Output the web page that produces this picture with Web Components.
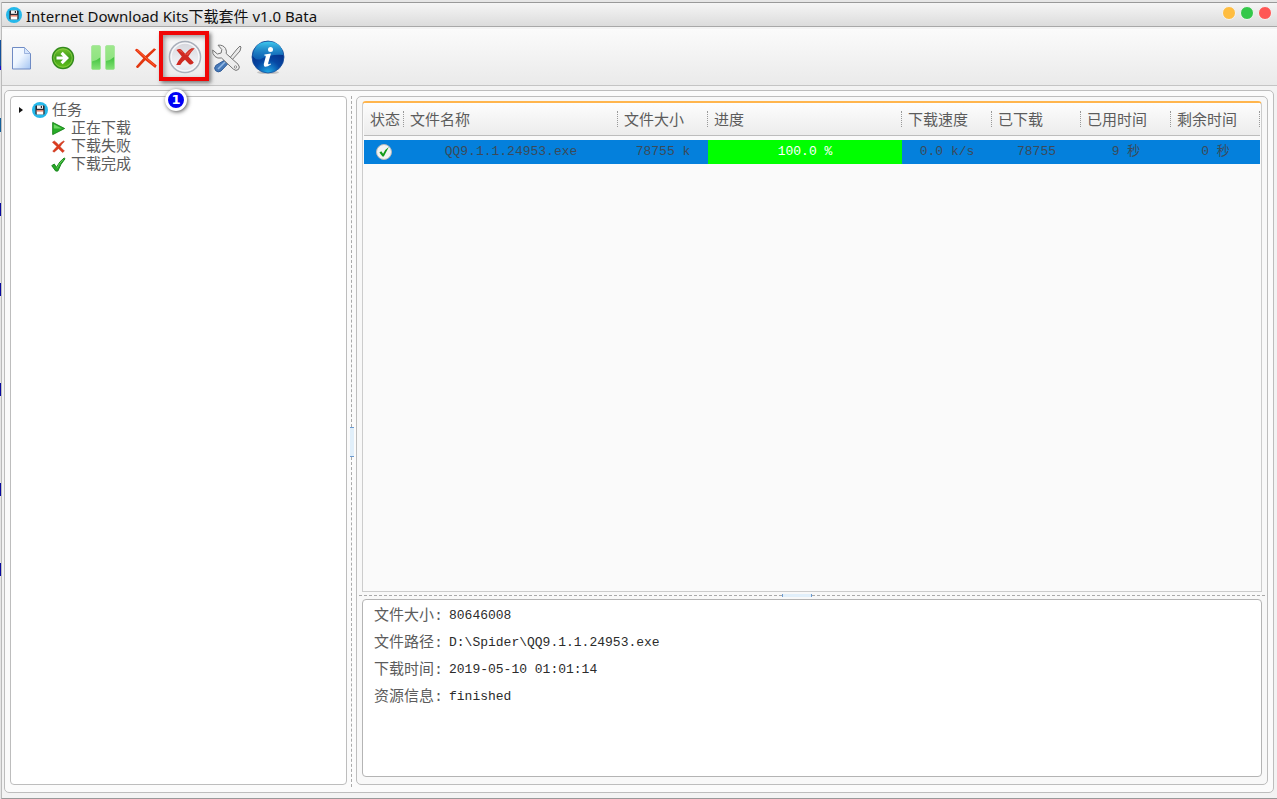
<!DOCTYPE html>
<html lang="zh-CN">
<head>
<meta charset="utf-8">
<title>Internet Download Kits下载套件 v1.0 Bata</title>
<style>
  html, body { height: 100%; margin: 0; }
  body {
    background: linear-gradient(#e6e6e6 40px, #14509a 40px 66px, #1a0ad0 66px 70px, #e6e6e6 70px 118px, #14609a 118px 132px, #e6e6e6 132px 203px, #0a0aa0 203px 216px, #e6e6e6 216px 283px, #0a0aa0 283px 296px, #e6e6e6 296px 383px, #0a0aa0 383px 396px, #e6e6e6 396px 483px, #0a0aa0 483px 496px, #e6e6e6 496px 563px, #0a0aa0 563px 576px, #e6e6e6 576px);
    box-sizing: border-box;
    padding: 2px 0 0 1px;
    font-family: "Liberation Mono", "Noto Sans CJK SC", monospace;
    color: #5c5c5c;
    overflow: hidden;
  }
</style>
</head>
<body>
<download-app></download-app>
<script>
const define = (name, html, setup) => {
  const template = document.createElement('template');
  template.innerHTML = html;
  customElements.define(name, class extends HTMLElement {
    constructor() {
      super();
      const root = this.attachShadow({ mode: 'open' });
      root.append(template.content.cloneNode(true));
      if (setup) setup(this, root);
    }
  });
};

const ICONS = {
  disk: `<svg viewBox="0 0 16 16"><circle cx="8" cy="8" r="8" fill="#25b8ea"/><path d="M3.400 4.200q0-.8.8-.8h7.600q.8 0 .8.8v7.600q0 .8-.8.8H4.200q-.8 0-.8-.8z" fill="#2b2b33"/><path d="M5 3.400h6v3.400H5z" fill="#f3f3f3"/><path d="M8.800 3.900h1.200v2.200H8.800z" fill="#2b2b33"/><path d="M4.700 8.300h6.600v4.200H4.700z" fill="#fff"/><path d="M4.700 8.300h6.600v1.200H4.700z" fill="#ef6a4c"/></svg>`,
  file: `<svg viewBox="0 0 36 36"><defs><linearGradient id="f" x1="0" y1="0" x2="1" y2="1"><stop offset="0" stop-color="#f6faff"/><stop offset=".45" stop-color="#eef6ff"/><stop offset="1" stop-color="#a3c4f2"/></linearGradient></defs><path d="M8.500 8.500h12l6 6v15.500H8.500z" fill="url(#f)" stroke="#6f8bc4"/><path d="M20.500 8.500v6h6z" fill="#d5e6fd" stroke="#8ba5d6" stroke-width=".8"/></svg>`,
  go: `<svg viewBox="0 0 36 36"><defs><linearGradient id="g" x1="0" y1="0" x2="0" y2="1"><stop offset="0" stop-color="#7cc832"/><stop offset=".5" stop-color="#3d9d19"/><stop offset="1" stop-color="#68c61c"/></linearGradient></defs><circle cx="18" cy="19" r="10.500" fill="url(#g)" stroke="#338a1d" stroke-width="1.400"/><circle cx="18" cy="19" r="9.200" fill="none" stroke="#8fd14a" stroke-width=".8"/><path d="M11.500 17.500H18l-2.500-2.600 2.200-2.200 6.300 6.300-6.300 6.300-2.200-2.200 2.500-2.600h-6.500z" fill="#fff"/></svg>`,
  pause: `<svg viewBox="0 0 36 36"><defs><linearGradient id="p" x1="0" y1="0" x2="0" y2="1"><stop offset="0" stop-color="#9ee88c"/><stop offset="1" stop-color="#86e07a"/></linearGradient><linearGradient id="q" x1="0" y1="0" x2="0" y2="1"><stop offset="0" stop-color="#3fc03c"/><stop offset="1" stop-color="#84e276"/></linearGradient></defs><g fill="url(#p)" stroke="#a4e59a" stroke-width=".8"><rect x="5.500" y="6.500" width="9" height="24" rx="1.500"/><rect x="19.500" y="6.500" width="9" height="24" rx="1.500"/></g><path d="M6 22.500q5-1 8.100-4v11q0 .8-.8.800H6.800q-.8 0-.8-.8zM20 22q5-1 8.100-4v11.500q0 .8-.8.8h-6.500q-.8 0-.8-.8z" fill="url(#q)"/></svg>`,
  cross: `<svg viewBox="0 0 36 36"><path d="M8 11.300Q9 8.600 11.200 10.400Q20 18.500 29.800 26.400L28.200 29Q17 21 8 11.300z" fill="#e9330f"/><path d="M27 9.300L29.200 10.500Q20 19 11.600 28.400Q9.500 30 9 27.600Q17 17.500 27 9.300z" fill="#e23710"/><path d="M10 11l17.500 15.500" stroke="#ff7438" stroke-width=".8"/></svg>`,
  stop: `<svg viewBox="0 0 36 36"><defs><linearGradient id="s" x1="0" y1="0" x2="0" y2="1"><stop offset="0" stop-color="#d4d5db"/><stop offset=".7" stop-color="#f0f1f5"/><stop offset="1" stop-color="#dfe4ec"/></linearGradient></defs><circle cx="17" cy="18" r="15.500" fill="url(#s)" stroke="#aab0bb" stroke-width="1.600"/><circle cx="17" cy="18" r="13.900" fill="none" stroke="#f8f8fa" stroke-width="1.300"/><path d="M8.500 11q3.500-2.200 5.500.2l3.200 3.500Q20 11 23.500 9.300h3.200Q23 13 20.300 17.500l5.500 6q-2.400 3.500-5 1.200L17 20.800Q14 23 12.300 26H8.200q2-4.500 5.600-8.500z" fill="#cf2a22"/><path d="M9.800 11.300q3-1 3.800.5l3.700 4.500Q20 12.500 24 10.200h1l-5.500 6z" fill="#e8604f" opacity=".7"/></svg>`,
  tools: `<svg viewBox="0 0 36 36"><path d="M31 7l1 1-1 4-9 10-2-2 8-10z" fill="#e9e9e9" stroke="#777" stroke-width="1"/><path d="M17.500 20l3 3-8.500 9q-3 2-5.500-.4-2-2.600.5-5.300z" fill="#4679b8" stroke="#315c98"/><path d="M16 23l-7 7" stroke="#94b9e4" stroke-width="1.600"/><path d="M9 6.200q5-.6 7.500 3.200 1.500 3 .7 5.200L29 25.200q2.500 3 .5 5.200-2.500 2.200-5.200-.3L12.500 19q-4 .8-6.500-1.500-3-2.800-2.300-6.500l4.700 4 3.700-1 .7-3.500z" fill="#ededed" stroke="#747474"/><circle cx="26.500" cy="28" r="1.200" fill="#fff" stroke="#777" stroke-width=".8"/></svg>`,
  info: `<svg viewBox="0 0 36 36"><defs><radialGradient id="i" cx=".5" cy="1" r=".9"><stop offset="0" stop-color="#20aee8"/><stop offset=".45" stop-color="#0648a4"/><stop offset="1" stop-color="#06257c"/></radialGradient><linearGradient id="j" x1="0" y1="0" x2="0" y2="1"><stop offset="0" stop-color="#3ec8ee"/><stop offset="1" stop-color="#1478c8" stop-opacity=".55"/></linearGradient></defs><ellipse cx="18" cy="33.500" rx="11" ry="1.600" fill="#999" opacity=".5"/><g transform="translate(0 1)"><circle cx="18" cy="17" r="16" fill="url(#i)" stroke="#174f9c" stroke-width=".8"/><path d="M2.700 16Q4 2 18 1.600 32 2 33.300 15 20 14 10 19.500 5 20 2.700 16z" fill="url(#j)"/><circle cx="20.500" cy="9.500" r="2.500" fill="#fff"/><path d="M14.500 14.500l6.500-1-2.800 9.500q-.5 2.300 2.300.4l.6.800Q13.500 29.500 13.800 24l2-7.500q.2-1.300-1.700-1z" fill="#fff"/></g></svg>`,
  play: `<svg viewBox="0 0 16 16"><path d="M1.800 1.500L14.500 8 1.800 14.500z" fill="#27ad27" stroke="#168216"/><path d="M3 3.500l8.500 4.500H3z" fill="#6ed964"/></svg>`,
  fail: `<svg viewBox="0 0 16 16"><path d="M1.500 3.500l2-1.500q3 2 4.600 4.300Q10.500 3.600 13.500 2l.8.700Q11.500 5 9.700 8.200l4.600 4.600-2 1.700L8 10.200 3.300 14l-1.500-1L6.300 8z" fill="#dd3a1d" stroke="#b82d16" stroke-width=".5"/></svg>`,
  done: `<svg viewBox="0 0 16 16"><path d="M.8 9.200L3.500 7.500 5.800 11Q9 4.500 14 1l1 .8Q10 7.500 7.300 15H5z" fill="#27a827" stroke="#15831a"/><path d="M6.300 12Q9 6 13 2.800" fill="none" stroke="#77dc69" stroke-width=".8"/></svg>`,
  status: `<svg viewBox="0 0 16 16"><circle cx="8" cy="8" r="7.500" fill="#f3f3f3" stroke="#b9b9b9"/><path d="M3.400 8.600l1.900-1.300 1.800 2.400Q9.300 5 12.800 3L7.800 12.500H6.500z" fill="#149b1b"/></svg>`
};

define('app-icon', `<style>
  :host { display: inline-block; flex: none; width: 16px; height: 16px; }
  svg { display: block; width: 100%; height: 100%; }
</style>`, (host, root) => {
  root.append(document.createRange().createContextualFragment(ICONS[host.getAttribute('name')]));
});

define('title-bar', `<style>
  :host { display: flex; align-items: center; height: 23px; padding: 0 5px 0 4px; background: linear-gradient(#f5f5f5, #dcdcdc); border-top: 1px solid #999; border-bottom: 1px solid #a8a8a8; color: #111; }
  h1 { flex: 1; margin: 0 0 0 4px; padding-top: 3px; font: 400 15px/20px "Noto Sans", "Noto Sans CJK SC", sans-serif; white-space: nowrap; }
  .buttons { display: flex; gap: 4px; align-self: flex-start; padding-top: 3px; }
  button { width: 14px; height: 14px; padding: 0; border: 1px solid #f4f4f4; border-radius: 50%; background: #ffbd40; }
  button:nth-child(2) { background: #34c84a; }
  button:nth-child(3) { background: #ff5755; }
</style>
<app-icon name="disk"></app-icon><h1><slot></slot></h1>
<div class="buttons"><button aria-label="最小化"></button><button aria-label="最大化"></button><button aria-label="关闭"></button></div>`);

define('tool-button', `<style>
  :host { display: block; position: relative; }
  button { display: block; width: 41px; height: 40px; padding: 0 2px; border: 0; background: none; }
  .frame, .badge { display: none; box-sizing: border-box; position: absolute; pointer-events: none; }
  :host([marked]) .frame { display: block; left: -7px; top: -6px; width: 50px; height: 50px; border: 4px solid #f00606; box-shadow: 2px 2px 4px #777, inset 2px 2px 5px #999; }
  :host([marked]) .badge { display: block; left: -1px; top: 52px; width: 22px; height: 22px; border: 3px solid #fff; border-radius: 50%; background: #0000f5; color: #fff; box-shadow: 1px 1px 4px #555; font: 700 13px/16px "DejaVu Sans", sans-serif; text-align: center; z-index: 2; }
</style>
<button></button><span class="frame"></span><span class="badge"><slot></slot></span>`, (host, root) => {
  const button = root.querySelector('button');
  button.setAttribute('aria-label', host.getAttribute('label'));
  button.append(document.createElement('app-icon-' + host.getAttribute('icon')));
});

for (const name of ['file', 'go', 'pause', 'cross', 'stop', 'tools', 'info']) {
  define('app-icon-' + name, `<style>:host { display: block; width: 36px; height: 36px; } svg { display: block; }</style>${ICONS[name]}`);
}

define('tool-bar', `<style>
  :host { display: flex; box-sizing: border-box; height: 59px; padding-top: 8px; background: linear-gradient(#fbfbfb, #eaeaea); border-top: 2px solid #f4f4f4; border-bottom: 1px solid #c4c4c4; }
</style>
<tool-button icon="file" label="新建"></tool-button><tool-button icon="go" label="开始"></tool-button><tool-button icon="pause" label="暂停"></tool-button><tool-button icon="cross" label="删除"></tool-button><tool-button icon="stop" label="全部删除" marked>1</tool-button><tool-button icon="tools" label="设置"></tool-button><tool-button icon="info" label="关于"></tool-button>`);

define('task-tree', `<style>
  :host { display: block; box-sizing: border-box; padding: 4px 7px; border: 1px solid #bdbdbd; border-radius: 4px; background: #fff; font-size: 15px; line-height: 18px; }
  ul { list-style: none; margin: 0; padding: 0; }
  ul ul { padding-left: 33px; }
  .row { display: flex; align-items: center; gap: 5px; height: 18px; }
  .root { gap: 4px; }
  .label { padding-top: 4px; }
  .arrow { box-sizing: border-box; border: 3px solid transparent; border-left: 4px solid #111; border-right: 0; height: 6px; width: 4px; margin: 0 5px 0 1px; }
  ul ul app-icon { width: 15px; height: 15px; }
</style>
<ul><li><div class="row root"><span class="arrow"></span><app-icon name="disk"></app-icon><span class="label">任务</span></div>
<ul><li class="row"><app-icon name="play"></app-icon><span class="label">正在下载</span></li>
<li class="row"><app-icon name="fail"></app-icon><span class="label">下载失败</span></li>
<li class="row"><app-icon name="done"></app-icon><span class="label">下载完成</span></li></ul></li></ul>`);

define('split-handle', `<style>
  :host { display: flex; flex-direction: column; align-items: center; width: 9px; }
  i { flex: 1; border-left: 1px dashed #aaa; }
  b { box-sizing: border-box; width: 4px; height: 30px; background: #e1effa; border: 0 solid #6d9bd0; border-width: 1px 0; }
  :host([horizontal]) { flex-direction: row; width: auto; height: 7px; }
  :host([horizontal]) i { flex: 15; border-left: 0; border-top: 1px dashed #aaa; }
  :host([horizontal]) i:first-of-type { flex: 14; }
  :host([horizontal]) b { width: 30px; height: 3px; border-width: 0 1px; }
</style><i></i><b></b><i></i>`);

define('download-table', `<style>
  :host { display: block; box-sizing: border-box; padding: 0 1px; border: 1px solid #ccc; border-top: 2px solid #ffb54d; border-radius: 4px 4px 0 0; background: #fafafa; }
  table { width: 100%; border-collapse: separate; border-spacing: 0; table-layout: fixed; }
  th { height: 32px; padding: 0; border-bottom: 1px solid #bdbdbd; background: linear-gradient(#fdfdfd, #ececec); text-align: left; font-size: 15px; font-weight: 400; }
  th span { display: block; height: 16px; line-height: 22px; padding-left: 6px; border-right: 1px dotted #999; white-space: nowrap; }
  tbody::before { content: ""; display: table-row; height: 4px; }
  td { height: 24px; padding: 0; background: #0480dc; color: #3c4a58; text-align: center; font-size: 13px; line-height: 24px; white-space: pre; }
  td app-icon { display: block; margin: 0 auto; }
  .bar { background: #0f0; color: #fff; }
  .s { width: 40px; } .n { width: 214px; } .m { width: 90px; } .l { width: 89px; }
</style>
<table><colgroup><col class="s"><col class="n"><col class="m"><col><col class="m"><col class="l"><col class="m"><col class="l"></colgroup>
<thead><tr><th><span>状态</span></th><th><span>文件名称</span></th><th><span>文件大小</span></th><th><span>进度</span></th><th><span>下载速度</span></th><th><span>已下载</span></th><th><span>已用时间</span></th><th><span>剩余时间</span></th></tr></thead>
<tbody><tr><td><app-icon name="status"></app-icon></td><td>QQ9.1.1.24953.exe</td><td>78755 k</td><td class="bar">100.0 %</td><td>0.0 k/s</td><td>78755</td><td>9 秒</td><td>0 秒</td></tr></tbody></table>`);

define('download-detail', `<style>
  :host { display: block; box-sizing: border-box; padding: 2px 11px; border: 1px solid #b4b4b4; border-radius: 4px; background: #fff; }
  dl { display: grid; grid-template-columns: 75px 1fr; grid-auto-rows: 27px; margin: 0; line-height: 27px; }
  dt { font-size: 15px; line-height: 29px; } dd { margin: 0; font-size: 13px; color: #2b2b2b; }
</style>
<dl><dt>文件大小:</dt><dd>80646008</dd><dt>文件路径:</dt><dd>D:\\Spider\\QQ9.1.1.24953.exe</dd><dt>下载时间:</dt><dd>2019-05-10 01:01:14</dd><dt>资源信息:</dt><dd>finished</dd></dl>`);

define('download-app', `<style>
  :host { display: flex; flex-direction: column; box-sizing: border-box; height: 100%; border-left: 1px solid #bbb; border-bottom: 1px solid #999; background: #f3f3f3; }
  main { flex: 1; display: flex; margin: 4px 3px 5px 2px; padding: 5px; border: 1px solid #bdbdbd; border-radius: 5px; background: #fbfbfb; min-height: 0; }
  task-tree { width: 337px; margin-bottom: 2px; }
  section { flex: 1; display: flex; flex-direction: column; min-width: 0; margin-bottom: 2px; padding: 4px 5px 7px; border: 1px solid #bdbdbd; border-radius: 5px; background: #f8f8f8; }
  download-table { flex: 1; }
  split-handle[horizontal] { margin: 0 -3px; }
  download-detail { height: 178px; }
</style>
<title-bar>Internet Download Kits下载套件 v1.0 Bata</title-bar>
<tool-bar></tool-bar>
<main><task-tree></task-tree><split-handle></split-handle>
<section><download-table></download-table><split-handle horizontal></split-handle><download-detail></download-detail></section></main>`);
</script>
</body>
</html>
